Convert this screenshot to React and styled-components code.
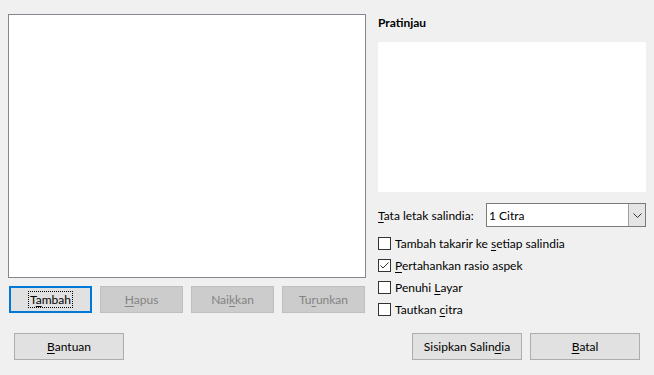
import React, { useState } from 'react';
import styled, { createGlobalStyle } from 'styled-components';

const GlobalStyle = createGlobalStyle`
  html, body {
    margin: 0;
    padding: 0;
    background: #f0f0f0;
  }
  body {
    font-family: "Segoe UI", Lato, "Noto Sans", sans-serif;
    font-size: 12px;
    color: #000;
  }
`;

const Dialog = styled.div`
  width: 654px;
  height: 375px;
  box-sizing: border-box;
  padding: 14px 8px 0 8px;
  display: flex;
  flex-direction: column;
`;

const Main = styled.div`
  display: grid;
  grid-template-columns: 358px 268px;
  column-gap: 12px;
`;

const LeftCol = styled.div`
  display: flex;
  flex-direction: column;
`;

const ListBox = styled.div`
  height: 264px;
  box-sizing: border-box;
  background: #fff;
  border: 1px solid #828790;
`;

const ButtonRow = styled.div`
  display: flex;
  gap: 8px;
  margin-top: 8px;
  padding-left: 1px;
`;

const Button = styled.button`
  width: ${p => p.$w || 83}px;
  height: 27px;
  box-sizing: border-box;
  padding: 0;
  font-family: inherit;
  font-size: inherit;
  color: ${p => (p.disabled ? '#838383' : '#000')};
  background: ${p => (p.disabled ? '#cccccc' : '#e1e1e1')};
  border: ${p => (p.$focus ? '2px solid #0078d7' : `1px solid ${p.disabled ? '#bfbfbf' : '#adadad'}`)};
  display: flex;
  align-items: center;
  justify-content: center;
  cursor: default;
  u {
    text-decoration: underline;
    text-underline-offset: 2px;
  }
`;

const FocusText = styled.span`
  outline: 1px dotted #000;
  outline-offset: 0px;
  padding: 0 1px;
  line-height: 15px;
`;

const RightCol = styled.div`
  display: flex;
  flex-direction: column;
`;

const Heading = styled.div`
  font-weight: bold;
  line-height: 16px;
  margin-top: 1px;
`;

const Preview = styled.div`
  height: 150px;
  background: #fff;
  margin-top: 11px;
`;

const LayoutRow = styled.div`
  display: flex;
  align-items: center;
  margin-top: 11px;
  height: 24px;
`;

const Label = styled.span`
  width: 108px;
  u {
    text-underline-offset: 2px;
  }
`;

const Combo = styled.div`
  flex: 1;
  height: 24px;
  box-sizing: border-box;
  background: #fff;
  border: 1px solid #7a7a7a;
  display: flex;
  align-items: center;
`;

const ComboText = styled.span`
  flex: 1;
  padding-left: 2px;
`;

const ComboArrow = styled.span`
  width: 17px;
  height: 22px;
  box-sizing: border-box;
  background: #e5e5e5;
  border-left: 1px solid #a0a0a0;
  display: flex;
  align-items: center;
  justify-content: center;
`;

const Checks = styled.div`
  display: flex;
  flex-direction: column;
  gap: 9px;
  margin-top: 10px;
`;

const CheckRow = styled.label`
  display: flex;
  align-items: center;
  height: 13px;
  gap: 4px;
  u {
    text-underline-offset: 2px;
  }
`;

const Box = styled.span`
  width: 13px;
  height: 13px;
  box-sizing: border-box;
  background: #fff;
  border: 1px solid #333;
  display: flex;
  align-items: center;
  justify-content: center;
`;

const Footer = styled.div`
  display: flex;
  align-items: center;
  margin-top: auto;
  margin-bottom: 15px;
  padding-left: 6px;
  padding-right: 6px;
  gap: 8px;
`;

const Spacer = styled.div`
  flex: 1;
`;

function Check({ checked, onToggle, children }) {
  return (
    <CheckRow onClick={onToggle}>
      <Box>
        {checked && (
          <svg width="11" height="11" viewBox="0 0 11 11">
            <path d="M1.5 5.5 L4 8 L9.5 2.5" fill="none" stroke="#333" strokeWidth="1" />
          </svg>
        )}
      </Box>
      <span>{children}</span>
    </CheckRow>
  );
}

export default function App() {
  const [checks, setChecks] = useState([false, true, false, false]);
  const toggle = i => setChecks(c => c.map((v, j) => (j === i ? !v : v)));

  return (
    <>
      <GlobalStyle />
      <Dialog>
        <Main>
          <LeftCol>
            <ListBox />
            <ButtonRow>
              <Button $focus>
                <FocusText>T<u>a</u>mbah</FocusText>
              </Button>
              <Button disabled><u>H</u>apus</Button>
              <Button disabled>Nai<u>k</u>kan</Button>
              <Button disabled>Tu<u>r</u>unkan</Button>
            </ButtonRow>
          </LeftCol>
          <RightCol>
            <Heading>Pratinjau</Heading>
            <Preview />
            <LayoutRow>
              <Label><u>T</u>ata letak salindia:</Label>
              <Combo>
                <ComboText>1 Citra</ComboText>
                <ComboArrow>
                  <svg width="9" height="5" viewBox="0 0 9 5">
                    <path d="M0.5 0.5 L4.5 4.5 L8.5 0.5" fill="none" stroke="#333" strokeWidth="1" />
                  </svg>
                </ComboArrow>
              </Combo>
            </LayoutRow>
            <Checks>
              <Check checked={checks[0]} onToggle={() => toggle(0)}>
                Tambah takarir ke <u>s</u>etiap salindia
              </Check>
              <Check checked={checks[1]} onToggle={() => toggle(1)}>
                <u>P</u>ertahankan rasio aspek
              </Check>
              <Check checked={checks[2]} onToggle={() => toggle(2)}>
                Penuhi <u>L</u>ayar
              </Check>
              <Check checked={checks[3]} onToggle={() => toggle(3)}>
                Tautkan <u>c</u>itra
              </Check>
            </Checks>
          </RightCol>
        </Main>
        <Footer>
          <Button $w={110}><u>B</u>antuan</Button>
          <Spacer />
          <Button $w={110}>Sisipkan Salin<u>d</u>ia</Button>
          <Button $w={110}><u>B</u>atal</Button>
        </Footer>
      </Dialog>
    </>
  );
}
